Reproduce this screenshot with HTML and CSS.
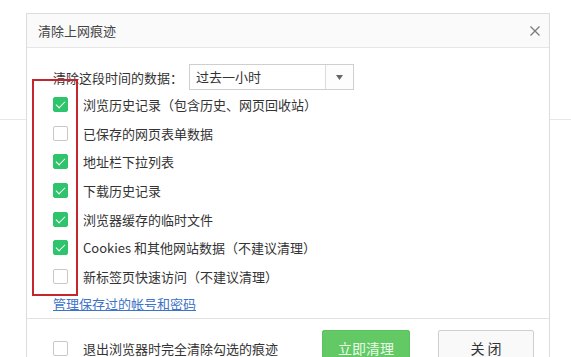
FILE: index.html
```html
<!DOCTYPE html>
<html lang="zh-CN">
<head>
    <meta charset="UTF-8">
    <title>清除上网痕迹</title>
    <link rel="stylesheet" href="styles.css">
</head>
<body>

<div class="page">
    <div class="page-top"></div>
</div>

<div class="dialog">
    <div class="dialog-title">
        <span>清除上网痕迹</span>
        <svg class="close-x" width="10" height="10" viewBox="0 0 10 10">
            <path d="M0.5 0.5 L9.5 9.5 M9.5 0.5 L0.5 9.5" stroke="#7a7a7a" stroke-width="1.3" fill="none"/>
        </svg>
    </div>

    <div class="dialog-body">
        <div class="range-row">
            <span>清除这段时间的数据：</span>
            <div class="select">
                <span class="select-text">过去一小时</span>
                <span class="select-arrow">
                    <svg width="7" height="5" viewBox="0 0 7 5"><path d="M0 0 L7 0 L3.5 5 Z" fill="#666"/></svg>
                </span>
            </div>
        </div>

        <ul class="items">
            <li><span class="box checked"></span>浏览历史记录（包含历史、网页回收站）</li>
            <li><span class="box"></span>已保存的网页表单数据</li>
            <li><span class="box checked"></span>地址栏下拉列表</li>
            <li><span class="box checked"></span>下载历史记录</li>
            <li><span class="box checked"></span>浏览器缓存的临时文件</li>
            <li><span class="box checked"></span>Cookies 和其他网站数据（不建议清理）</li>
            <li><span class="box"></span>新标签页快速访问（不建议清理）</li>
        </ul>

        <a class="manage-link" href="#">管理保存过的帐号和密码</a>
    </div>

    <div class="dialog-footer">
        <label class="exit-clear"><span class="box"></span>退出浏览器时完全清除勾选的痕迹</label>
        <button class="btn btn-green">立即清理</button>
        <button class="btn btn-plain">关 闭</button>
    </div>
</div>

<!-- red mark drawn over the checkboxes -->
<div class="red-mark"></div>

</body>
</html>
```

FILE: styles.css
```css
body {
    margin: 0;
    padding: 0;
    background: #fff;
    font-family: "Noto Sans CJK SC", "Microsoft YaHei", sans-serif;
    font-size: 13px;
    color: #333;
    overflow: hidden;
}

.page {
    height: 357px;
}

.page-top {
    height: 119px;
    border-bottom: 1px solid #e8e8e8;
}

/* dialog sits over the page, cut by the bottom of the window */
.dialog {
    position: absolute;
    left: 26px;
    top: 13px;
    width: 522px;
    height: 343px;
    overflow: hidden;
    background: #fff;
    border: 1px solid #dcdcdc;
    border-bottom: none;
}

.dialog-title {
    height: 33px;
    display: flex;
    align-items: center;
    justify-content: space-between;
    padding: 0 9px 0 11px;
    background: #fafafa;
    border-bottom: 1px solid #e6e6e6;
    color: #444;
}

.dialog-body {
    padding: 16px 0 0 26px;
    height: 254px;
    border-bottom: 1px solid #e3e3e3;
}

.range-row {
    display: flex;
    align-items: center;
    height: 26px;
    gap: 6px;
}

.select {
    display: flex;
    width: 163px;
    height: 24px;
    border: 1px solid #cfcfcf;
}

.select-text {
    flex: 1;
    padding-left: 6px;
    line-height: 24px;
}

.select-arrow {
    width: 27px;
    border-left: 1px solid #dcdcdc;
    display: flex;
    align-items: center;
    justify-content: center;
    background: #fdfdfd;
}

.items {
    list-style: none;
    margin: 0;
    padding: 0;
}

.items li {
    height: 28.7px;
    display: flex;
    align-items: center;
}

.box {
    display: inline-block;
    width: 13px;
    height: 13px;
    border: 1px solid #c8c8c8;
    border-radius: 2px;
    background: #fff;
    margin-right: 15px;
    flex-shrink: 0;
    position: relative;
}

.box.checked {
    background: #2fc46c;
    border-color: #2fc46c;
}

.box.checked::after {
    content: "";
    position: absolute;
    left: 4px;
    top: 1px;
    width: 4px;
    height: 8px;
    border-right: 1.5px solid #fff;
    border-bottom: 1.5px solid #fff;
    transform: rotate(45deg);
}

.manage-link {
    display: block;
    height: 26px;
    line-height: 26px;
    color: #3d73c8;
    text-decoration: underline;
}

.dialog-footer {
    display: flex;
    align-items: flex-start;
    padding: 11px 0 0 26px;
    height: 36px;
}

.exit-clear {
    display: flex;
    align-items: center;
    height: 36px;
    width: 269px;
}

.btn {
    height: 36px;
    font-family: inherit;
    font-size: 14px;
    border-radius: 2px;
    cursor: pointer;
    flex-shrink: 0;
}

.btn-green {
    width: 88px;
    margin-right: 28px;
    background: #62c964;
    border: 1px solid #5ac15c;
    color: #eafbe9;
}

.btn-plain {
    width: 96px;
    background: #f9f9f9;
    border: 1px solid #cfcfcf;
    color: #333;
}

.red-mark {
    position: absolute;
    left: 32px;
    top: 79px;
    width: 42px;
    height: 213px;
    border: 2px solid #c4262d;
}
```
